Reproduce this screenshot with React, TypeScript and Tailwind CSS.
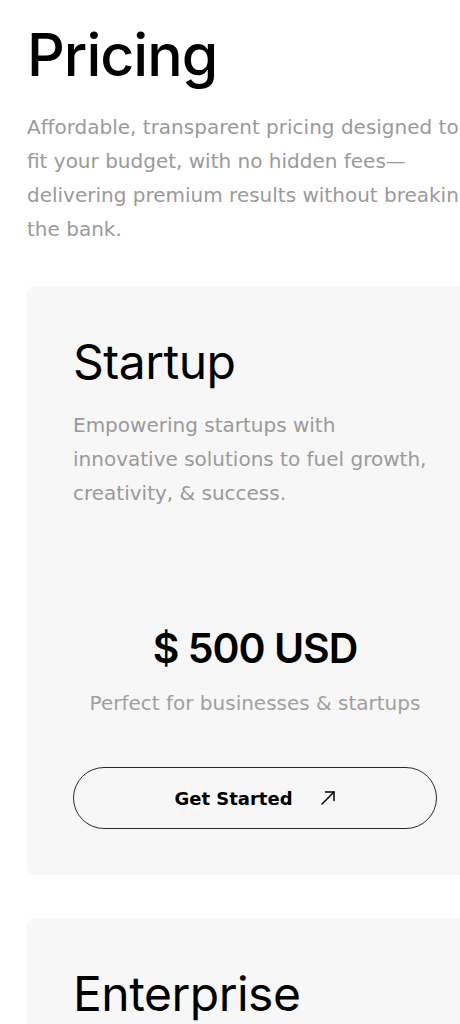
function ArrowIcon() {
  return (
    <svg viewBox="0 0 16 16" className="h-[16px] w-[16px]" fill="none" stroke="currentColor" strokeWidth={1.5} strokeLinecap="round" strokeLinejoin="round">
      <path d="M2 14 L14 2" />
      <path d="M5.5 2 H14 V10.5" />
    </svg>
  )
}

function PlanCard({ name, blurb, price, note }: { name: string; blurb?: string; price?: string; note?: string }) {
  return (
    <div className="rounded-lg bg-[#f7f7f7] px-[46px] pt-[47px] pb-[46px]">
      <h2 className="font-['Inter'] text-[48px] leading-[58px] font-normal tracking-[-0.5px] text-black">{name}</h2>
      {blurb && (
        <p className="mt-[17px] font-['DejaVu_Sans'] text-[20px] leading-[34px] text-[#9a9a9a]">{blurb}</p>
      )}
      {price && (
        <div className="mt-[114px] flex flex-col items-center">
          <div className="font-['Inter'] text-[41px] leading-[48px] font-semibold tracking-[-1px] text-black">{price}</div>
          <div className="mt-[17px] font-['DejaVu_Sans'] text-[20px] leading-[28px] text-[#a0a0a0]">{note}</div>
          <button className="mt-[50px] flex h-[62px] w-full items-center justify-center gap-[27px] rounded-full border border-[#2a2a2a] font-['DejaVu_Sans'] text-[18px] font-bold text-black">
            Get Started
            <ArrowIcon />
          </button>
        </div>
      )}
    </div>
  )
}

export default function App() {
  return (
    <div className="w-[460px] overflow-hidden bg-white">
      <div className="w-[510px] px-[27px] pt-[19px]">
        <h1 className="font-['Inter'] text-[59px] leading-[72px] font-medium tracking-[-1px] text-black">Pricing</h1>
        <p className="mt-[19px] font-['DejaVu_Sans'] text-[20px] leading-[34px] text-[#9a9a9a]">
          Affordable, transparent pricing designed to fit your budget, with no hidden fees—delivering premium results
          without breaking the bank.
        </p>
        <div className="mt-[40px] flex flex-col gap-[43px]">
          <PlanCard
            name="Startup"
            blurb="Empowering startups with innovative solutions to fuel growth, creativity, & success."
            price="$ 500 USD"
            note="Perfect for businesses & startups"
          />
          <PlanCard name="Enterprise" />
        </div>
      </div>
    </div>
  )
}
